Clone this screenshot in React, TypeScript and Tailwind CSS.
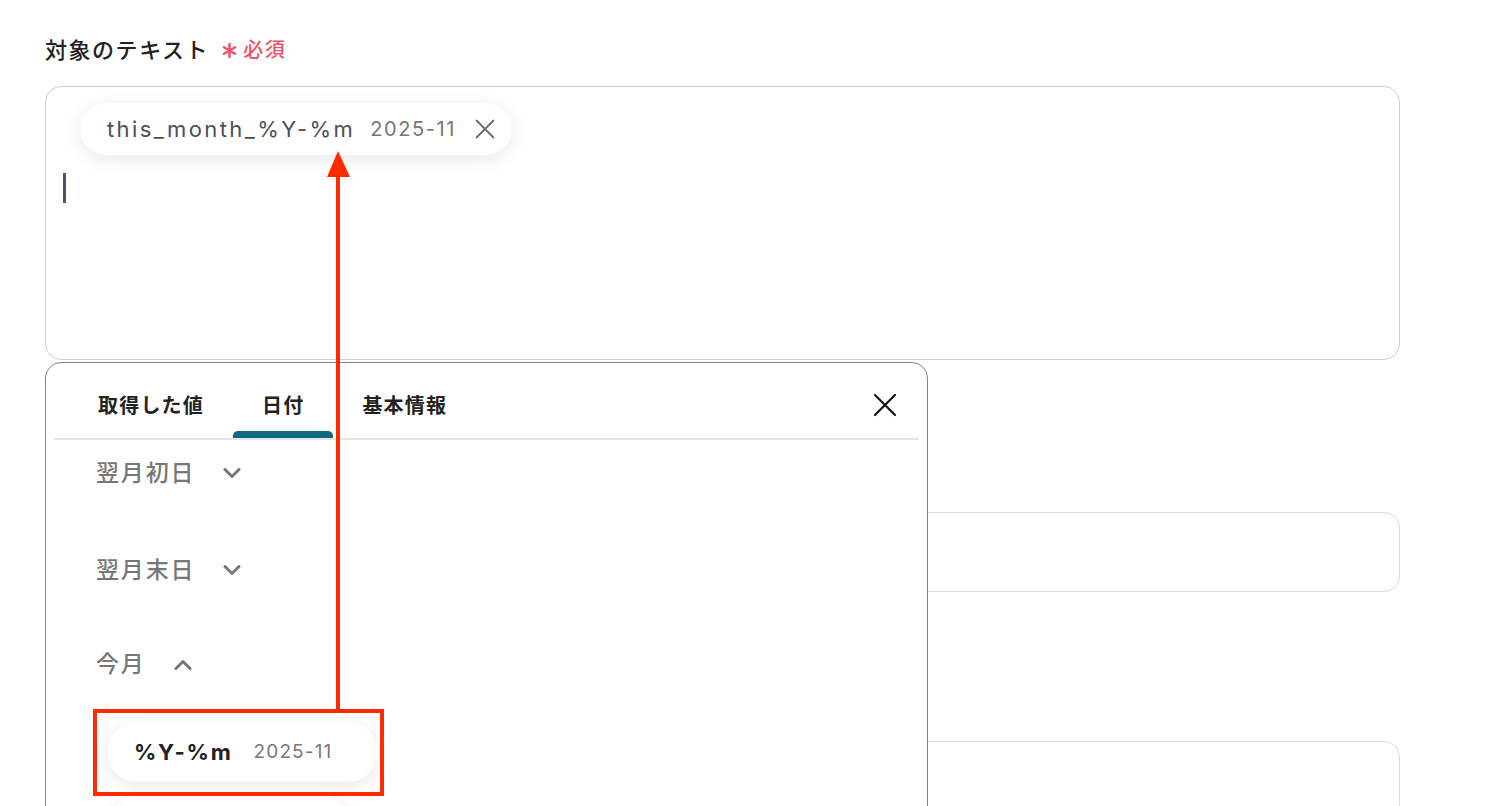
import React from "react";

const tabs = [
  { label: "取得した値", active: false },
  { label: "日付", active: true },
  { label: "基本情報", active: false },
];

const Chevron = ({ up = false }: { up?: boolean }) => (
  <svg width="18" height="11" viewBox="0 0 18 11" fill="none">
    <path
      d={up ? "M2 9.5 L9 2.5 L16 9.5" : "M2 1.5 L9 8.5 L16 1.5"}
      stroke="#777777"
      strokeWidth="3"
      strokeLinecap="round"
      strokeLinejoin="round"
    />
  </svg>
);

const Cross = ({ size, color, width }: { size: number; color: string; width: number }) => (
  <svg width={size} height={size} viewBox="0 0 24 24" fill="none">
    <path d="M2 2 L22 22 M22 2 L2 22" stroke={color} strokeWidth={width} strokeLinecap="round" />
  </svg>
);

const ListHeader = ({ label, open = false }: { label: string; open?: boolean }) => (
  <div className="flex h-[30px] items-center gap-[28px]">
    <span className="text-[23px] font-medium leading-[30px] tracking-[0.08em] text-[#777777]">{label}</span>
    <Chevron up={open} />
  </div>
);

export default function App() {
  return (
    <div className="relative h-[806px] w-[1500px] overflow-hidden bg-white font-['Inter','Noto_Sans_CJK_JP',sans-serif]">
      {/* form behind the picker */}
      <div className="w-[1400px] pl-[45px] pt-[35px]">
        <div className="flex h-[30px] items-center">
          <span className="text-[22px] font-medium tracking-[0.07em] text-[#222222]">対象のテキスト</span>
          <svg className="ml-[13px]" width="15" height="15" viewBox="0 0 16 16">
            <path d="M8 1 V15 M2 4.5 L14 11.5 M14 4.5 L2 11.5" stroke="#f0506a" strokeWidth="2.6" strokeLinecap="round" />
          </svg>
          <span className="ml-[6px] text-[20px] font-medium tracking-[0.08em] text-[#f0506a]">必須</span>
        </div>

        <div className="mt-[21px] h-[274px] rounded-[16px] border border-[#cfcfcf] px-[34px] pt-[16px]">
          <div className="inline-flex h-[52px] items-center rounded-full bg-white pl-[27px] pr-[17px] shadow-[0_4px_18px_rgba(0,0,0,0.09)]">
            <span className="text-[22px] tracking-[0.11em] text-[#4b5058]">this_month_%Y-%m</span>
            <span className="ml-[15px] text-[20px] tracking-[0.08em] text-[#777777]">2025-11</span>
            <span className="ml-[19px]">
              <Cross size={20} color="#666666" width={2.4} />
            </span>
          </div>
          <div className="-ml-[17px] mt-[18px] h-[30px] w-[3px] bg-[#4b5563]" />
        </div>

        <div className="mt-[152px] h-[80px] rounded-[16px] border border-[#d6dbe1]" />
        <div className="mt-[149px] h-[80px] rounded-[16px] border border-[#d6dbe1]" />
      </div>

      {/* variable picker */}
      <div className="absolute left-[45px] top-[362px] h-[470px] w-[883px] rounded-[16px] border-[1.5px] border-[#858585] bg-white px-[8px]">
        <div className="flex items-end border-b-2 border-[#e6e6e6] pl-[15px]">
          {tabs.map((tab) => (
            <div key={tab.label} className="flex flex-col items-stretch">
              <span className="px-[29px] pt-[30px] text-[20px] font-bold leading-[26px] tracking-[0.06em] text-[#222222]">
                {tab.label}
              </span>
              <div className={`mt-[12px] h-[7px] rounded-t-[5px] ${tab.active ? "bg-[#0e6a80]" : "bg-transparent"}`} />
            </div>
          ))}
          <button className="ml-auto mr-[22px] mt-[30px] self-start">
            <Cross size={24} color="#111111" width={2.2} />
          </button>
        </div>

        <div className="flex flex-col items-start pl-[42px]">
          <div className="mt-[18px]">
            <ListHeader label="翌月初日" />
          </div>
          <div className="mt-[67px]">
            <ListHeader label="翌月末日" />
          </div>
          <div className="mt-[64px]">
            <ListHeader label="今月" open />
          </div>
          <div className="ml-[11px] mt-[43px] inline-flex h-[60px] items-center rounded-full bg-white pl-[27px] pr-[46px] shadow-[0_4px_16px_rgba(0,0,0,0.09)]">
            <span className="text-[22px] font-bold tracking-[0.08em] text-[#222222]">%Y-%m</span>
            <span className="ml-[21px] text-[19px] tracking-[0.06em] text-[#777777]">2025-11</span>
          </div>
          <div className="ml-[14px] mt-[13px] h-[60px] w-[240px] rounded-full bg-white shadow-[0_4px_16px_rgba(0,0,0,0.09)]" />
        </div>
      </div>

      {/* annotation */}
      <svg className="absolute left-[326px] top-[150px]" width="26" height="562" viewBox="0 0 26 562">
        <polygon points="12,1 1,27 24,27" fill="#ff2b00" />
        <rect x="10" y="24" width="4" height="538" fill="#ff2b00" />
      </svg>
      <div className="absolute left-[93px] top-[709px] h-[87px] w-[291px] border-4 border-[#ff2b00]" />
    </div>
  );
}
